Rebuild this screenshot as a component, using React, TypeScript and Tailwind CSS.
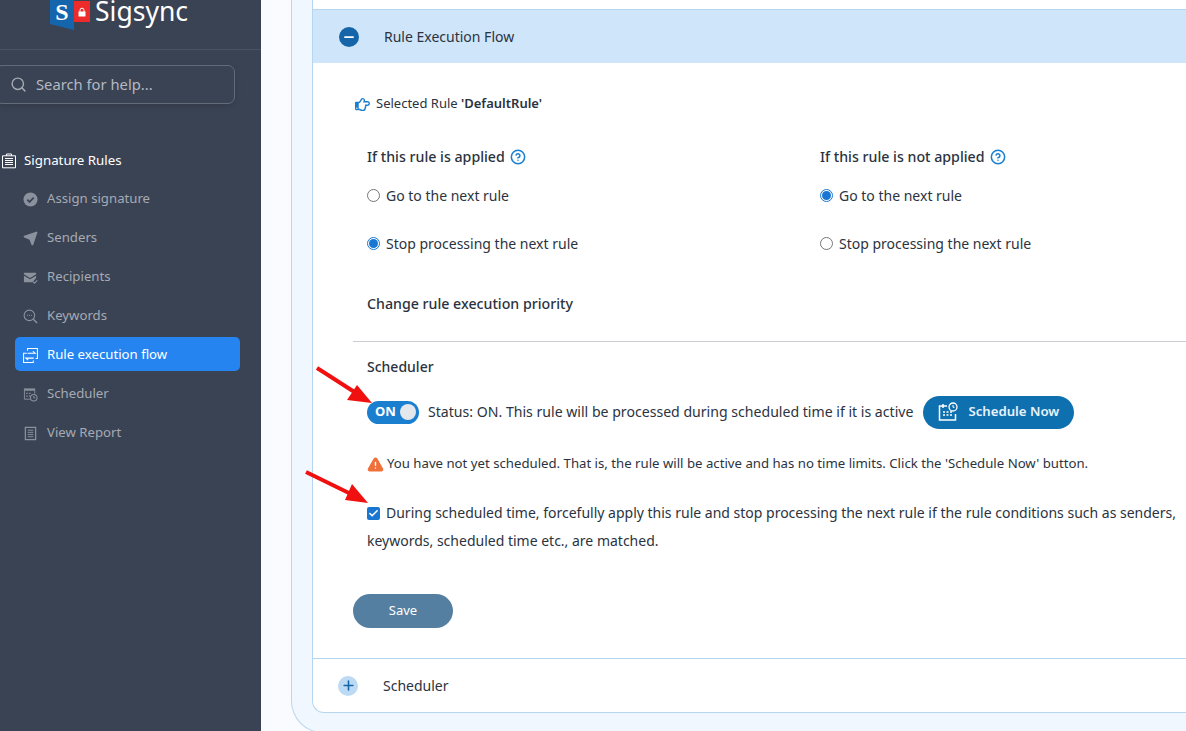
import { Search, Send, Minus, Plus, CircleHelp, TriangleAlert, Check } from "lucide-react";
import { FaRegHandPointRight } from "react-icons/fa";
import { ReactNode } from "react";

const font = { fontFamily: '"Noto Sans", sans-serif' };

const CheckBadge = () => (
  <svg viewBox="0 0 16 16" className="w-[15px] h-[15px]">
    <circle cx="8" cy="8" r="7.500" fill="#8b919d" />
    <path d="M4.600 8.200l2.400 2.400 4.400-4.600" fill="none" stroke="#3a4354" strokeWidth="1.800" />
  </svg>
);

const MailCheck = () => (
  <svg viewBox="0 0 16 16" className="w-[15px] h-[15px]">
    <path d="M1 3h13v1.600L7.500 8.400 1 4.600z" fill="#8b919d" />
    <path d="M1 6l6.500 3.800L14 6v2.500L10 13H1z" fill="#8b919d" />
    <path d="M10.600 12.500l1.600 1.600 3-3" fill="none" stroke="#8b919d" strokeWidth="1.200" />
  </svg>
);

const KeywordSearch = () => (
  <svg viewBox="0 0 16 16" className="w-[15px] h-[15px]" fill="none" stroke="#8b919d" strokeWidth="1.200">
    <circle cx="6.800" cy="6.800" r="5.600" />
    <path d="M11 11l4 4" strokeWidth="1.500" />
    <path d="M4.400 6.800h.9M6.400 6.800h.9M8.400 6.800h.9" />
  </svg>
);

const FlowIcon = () => (
  <svg viewBox="0 0 16 16" className="w-[15px] h-[15px]" fill="none" stroke="#fff" strokeWidth="1.100">
    <path d="M4.800 3V.6H15.400V11.200H13.500" />
    <path d="M4 5.500H.6V15.400H11V13.200" />
    <path d="M4.800 5.500H13L10.500 3.500" />
    <path d="M11.500 10.800H3L5.500 12.800" />
  </svg>
);

const CalendarClock = () => (
  <svg viewBox="0 0 16 16" className="w-[15px] h-[15px]">
    <path d="M1 1.500h12V4H1z" fill="#8b919d" />
    <path d="M1.500 4v9h6M12.500 4v3" fill="none" stroke="#8b919d" />
    <path d="M3.500 6h1.500v1.500H3.500zM6.500 6H8v1.500H6.500zM3.500 9h1.500v1.500H3.500zM6.500 9H8v1.500H6.500z" fill="#8b919d" />
    <circle cx="11.500" cy="11.500" r="3.500" fill="none" stroke="#8b919d" strokeWidth="1.100" />
    <path d="M11.500 9.500v2.200h1.600" fill="none" stroke="#8b919d" />
  </svg>
);

const ReportIcon = () => (
  <svg viewBox="0 0 16 16" className="w-[15px] h-[15px]" fill="none" stroke="#8b919d" strokeWidth="1.300">
    <path d="M2.500 1.500h11v13h-11z" />
    <path d="M5 4.500h6M5 6.800h6M5 9.100h6M5 11.400h6" strokeWidth="1" />
  </svg>
);

const ClipboardIcon = () => (
  <svg viewBox="0 0 16 16" className="w-[16px] h-[16px]" fill="none" stroke="#fff" strokeWidth="1">
    <path d="M1.500 2.800h13v12h-13z" />
    <path d="M5.500 2.800V1h5v1.800" />
    <path d="M4 5.500h8M4 7.500h8M4 9.500h8M4 11.500h8" strokeWidth="1.200" />
  </svg>
);

const items: { label: string; icon: ReactNode; active?: boolean }[] = [
  { label: "Assign signature", icon: <CheckBadge /> },
  { label: "Senders", icon: <Send size={15} fill="#8b919d" stroke="#8b919d" /> },
  { label: "Recipients", icon: <MailCheck /> },
  { label: "Keywords", icon: <KeywordSearch /> },
  { label: "Rule execution flow", icon: <FlowIcon />, active: true },
  { label: "Scheduler", icon: <CalendarClock /> },
  { label: "View Report", icon: <ReportIcon /> },
];

function Radio({ label, checked }: { label: string; checked?: boolean }) {
  return (
    <div className="flex items-center gap-[6px] h-[20px] text-[14px] text-[#2b3340]">
      {checked ? (
        <span className="w-[13px] h-[13px] rounded-full border border-[#1976d2] flex items-center justify-center">
          <span className="w-[9px] h-[9px] rounded-full bg-[#1976d2]" />
        </span>
      ) : (
        <span className="w-[13px] h-[13px] rounded-full border border-[#767676] bg-white" />
      )}
      {label}
    </div>
  );
}

function RuleColumn({ title, first }: { title: string; first?: boolean }) {
  return (
    <div className="w-[453px] shrink-0">
      <div className="flex items-center gap-[5px] h-[20px] text-[14.200px] font-medium text-[#2b3340]">
        {title}
        <CircleHelp size={16} strokeWidth={2.300} className="text-[#1b7fd0]" />
      </div>
      <div className="mt-[18px]"><Radio label="Go to the next rule" checked={!first} /></div>
      <div className="mt-[28px]"><Radio label="Stop processing the next rule" checked={first} /></div>
    </div>
  );
}

function Arrow({ className, line, head }: { className: string; line: string; head: string }) {
  return (
    <svg viewBox="0 0 70 50" className={`absolute w-[70px] h-[50px] ${className}`}>
      <path d={line} stroke="#f01010" strokeWidth="4" />
      <path d={head} fill="#f01010" />
    </svg>
  );
}

export default function App() {
  return (
    <div className="flex w-[1186px] h-[731px] overflow-hidden bg-[#f9fbfe]" style={font}>
      <aside className="w-[261px] shrink-0 bg-[#3a4354] h-full">
        <div className="h-[50px] border-b border-[#4a5364] flex items-start pl-[50px]">
          <div className="flex items-start">
            <div
              className="w-[24px] h-[30px] bg-[#1565ad] text-white text-[24px] leading-[24px] font-bold text-center [clip-path:polygon(0_0,100%_0,100%_100%,0_80%)]"
              style={{ fontFamily: '"Liberation Serif", serif' }}
            >
              S
            </div>
            <div className="w-[16px] h-[21px] mt-[1px] bg-[#ee2b2b] flex items-center justify-center">
              <svg viewBox="0 0 10 10" className="w-[10px] h-[10px]">
                <path d="M3 5V3.200a2 2 0 0 1 4 0V5" fill="none" stroke="#fff" />
                <path d="M1.500 4.500h7V9.500h-7z" fill="#fff" />
              </svg>
            </div>
            <span className="ml-[5px] -mt-[2px] text-[26.500px] leading-[26px] text-white">Sigsync</span>
          </div>
        </div>
        <div className="mt-[15px] -ml-[5px] w-[240px] h-[39px] rounded-[7px] border border-[#636b79] flex items-center pl-[14px] gap-[9px] shadow-[0_2px_6px_rgba(0,0,0,0.12)]">
          <Search size={17} className="text-[#a5aab3]" />
          <span className="text-[14.750px] text-[#b4b9c2]">Search for help...</span>
        </div>
        <div className="mt-[47px] flex items-center h-[20px] pl-[1px] gap-[7px] text-[13.300px] text-white">
          <ClipboardIcon />
          Signature Rules
        </div>
        <nav className="mt-[10px] ml-[15px] w-[225px] flex flex-col gap-[5px]">
          {items.map((item) => (
            <div
              key={item.label}
              className={`h-[34px] pt-[2px] flex items-center gap-[9px] pl-[8px] rounded-[5px] text-[13.200px] ${item.active ? "bg-[#2684f0] text-white" : "text-[#a5aab3]"}`}
            >
              {item.icon}
              {item.label}
            </div>
          ))}
        </nav>
      </aside>

      <main className="flex-1 min-w-0 pl-[30px]">
        <div className="relative w-[1000px] h-[733px] bg-[#f1f7fe] border-l border-b border-[#bcd6ec] rounded-bl-[32px] pl-[20px]">
          <div className="w-[980px] h-[713px] bg-white border-l border-b border-[#b6d6ef] rounded-bl-[12px] pt-[9px]">
            <div className="h-[54px] bg-[#cfe5fa] border-t border-[#b6d6ef] flex items-center pl-[26px] gap-[25px] text-[14px] text-[#2b3340]">
              <span className="w-[20px] h-[20px] rounded-full bg-[#1565a8] flex items-center justify-center">
                <Minus size={14} strokeWidth={3} className="text-white" />
              </span>
              Rule Execution Flow
            </div>

            <div className="pl-[40px]">
              <div className="mt-[31px] pl-[2px] flex items-center gap-[6px] h-[20px] text-[13px] text-[#2b3340]">
                <FaRegHandPointRight size={15} className="text-[#1b7fd0]" />
                <span>Selected Rule <b className="font-semibold">'DefaultRule'</b></span>
              </div>

              <div className="mt-[33px] pl-[14px] flex">
                <RuleColumn title="If this rule is applied" first />
                <RuleColumn title="If this rule is not applied" />
              </div>

              <div className="mt-[41px] pl-[14px] h-[20px] flex items-center text-[14.200px] font-medium text-[#2b3340]">
                Change rule execution priority
              </div>

              <div className="mt-[27px] border-t border-[#c9ccd1] pt-[14px] pl-[14px]">
                <div className="h-[20px] flex items-center text-[14px] font-medium text-[#2b3340]">Scheduler</div>

                <div className="mt-[20px] flex items-center h-[32px] text-[14.100px] text-[#2b3340]">
                  <div className="w-[52px] h-[23px] rounded-full bg-[#1b7fd0] flex items-center justify-between pl-[8px] pr-[3px] text-[13px] font-bold text-white">
                    ON
                    <span className="w-[16px] h-[16px] rounded-full bg-[#e4e7ec]" />
                  </div>
                  <span className="ml-[9px]">Status: ON. This rule will be processed during scheduled time if it is active</span>
                  <div className="ml-[10px] w-[151px] h-[33px] rounded-full bg-[#0f70b0] flex items-center pl-[15px] gap-[10px] text-[13.200px] font-semibold text-[#e8f2f9]">
                    <svg viewBox="0 0 20 20" className="w-[20px] h-[20px]" fill="none" stroke="#fff" strokeWidth="1.500">
                      <path d="M9 4H1.500v14h16v-6" />
                      <path d="M5 2v4" />
                      <path d="M5 10h2M8.500 10h2M12 10h2M5 13h2M8.500 13h2M12 13h2" strokeWidth="1.700" />
                      <circle cx="15" cy="5" r="4" strokeWidth="1.300" />
                      <path d="M15 3v2.300h1.500" strokeWidth="1" />
                    </svg>
                    Schedule Now
                  </div>
                </div>

                <div className="mt-[26px] flex items-center gap-[3px] h-[20px] text-[13.200px] text-[#2b3340]">
                  <TriangleAlert size={17} fill="#f0703c" stroke="#f0703c" className="[&>path:not(:first-child)]:stroke-white" />
                  You have not yet scheduled. That is, the rule will be active and has no time limits. Click the 'Schedule Now' button.
                </div>

                <div className="mt-[25px] w-[815px] text-[14px] leading-[28px] text-[#2b3340]">
                  <span className="inline-flex align-[-1px] w-[13px] h-[13px] mr-[6px] rounded-[2px] bg-[#1976d2] items-center justify-center">
                    <Check size={11} strokeWidth={3.500} className="text-white" />
                  </span>
                  During scheduled time, forcefully apply this rule and stop processing the next rule if the rule conditions such as senders, keywords, scheduled time etc., are matched.
                </div>
              </div>

              <div className="mt-[39px] w-[100px] h-[34px] rounded-full bg-[#557fa0] flex items-center justify-center text-[13px] text-white">
                Save
              </div>
            </div>

            <div className="mt-[30px] h-[54px] border-t border-[#b6d6ef] flex items-center pl-[25px] gap-[25px] text-[14px] text-[#2b3340]">
              <span className="w-[20px] h-[20px] rounded-full bg-[#bcdaf3] flex items-center justify-center">
                <Plus size={15} strokeWidth={2.500} className="text-[#1565a8]" />
              </span>
              Scheduler
            </div>
          </div>

          <Arrow className="left-[24px] top-[365px]" line="M1 3L40 28" head="M56 38L31 35 41 20z" />
          <Arrow className="left-[13px] top-[469px]" line="M1 3L48 26" head="M63 34L40 31 47 15z" />
        </div>
      </main>
    </div>
  );
}
